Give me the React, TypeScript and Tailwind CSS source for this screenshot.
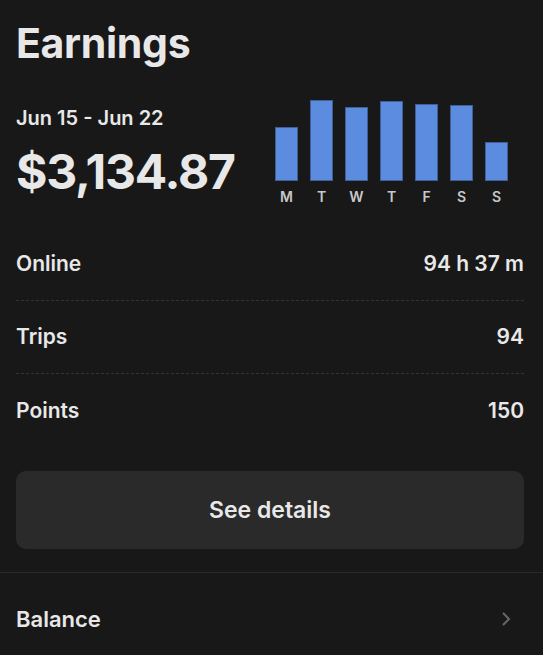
import React from "react";

const days = [
  { d: "M", h: 54 },
  { d: "T", h: 81 },
  { d: "W", h: 74 },
  { d: "T", h: 80 },
  { d: "F", h: 77 },
  { d: "S", h: 76 },
  { d: "S", h: 39 },
];

const stats = [
  { label: "Online", value: "94 h 37 m" },
  { label: "Trips", value: "94" },
  { label: "Points", value: "150" },
];

export default function App() {
  return (
    <div
      className="min-h-screen w-full bg-[#181818] text-[#e8e8e8]"
      style={{ fontFamily: "Inter, 'Noto Sans', sans-serif" }}
    >
      <div className="pl-4 pr-[19px]">
        <h1 className="pt-[17px] text-[41px] font-bold leading-[52px] tracking-[-0.3px]">Earnings</h1>

        <div className="mt-[37px] flex items-start justify-between">
          <div>
            <div className="text-[20px] font-semibold leading-[24px]">Jun 15 - Jun 22</div>
            <div className="mt-[12px] text-[48px] font-bold leading-[60px] tracking-[-1.2px]">$3,134.87</div>
          </div>
          <div className="mr-[16px] mt-[-7px] flex flex-col">
            <div className="flex h-[82px] items-end gap-[12px]">
              {days.map((x, i) => (
                <div
                  key={i}
                  className="w-[23px] border border-[#3f5f96] bg-[#5b8ce0]"
                  style={{ height: x.h }}
                />
              ))}
            </div>
            <div className="mt-[8px] flex gap-[12px]">
              {days.map((x, i) => (
                <div key={i} className="w-[23px] text-center text-[14px] font-semibold leading-[16px] text-[#c8c8c8]">
                  {x.d}
                </div>
              ))}
            </div>
          </div>
        </div>

        <div className="mt-[23px]">
          {stats.map((s, i) => (
            <div
              key={s.label}
              className={`flex h-[73px] items-center justify-between text-[21px] font-semibold ${
                i < stats.length - 1 ? "border-b border-dashed border-[#333333]" : ""
              }`}
            >
              <span>{s.label}</span>
              <span>{s.value}</span>
            </div>
          ))}
        </div>

        <button className="mt-[24px] flex h-[78px] w-full items-center justify-center rounded-[10px] bg-[#2a2a2a] text-[23px] font-semibold text-[#e8e8e8]">
          See details
        </button>
      </div>

      <div className="mt-[23px] border-t border-[#2a2a2a]">
        <div className="flex h-[92px] items-center justify-between pl-4 pr-[19px]">
          <span className="text-[22px] font-semibold">Balance</span>
          <svg width="10" height="16" viewBox="0 0 10 16" className="mr-[13px]">
            <path d="M2 2l6 6-6 6" fill="none" stroke="#666" strokeWidth="2" />
          </svg>
        </div>
      </div>
    </div>
  );
}
